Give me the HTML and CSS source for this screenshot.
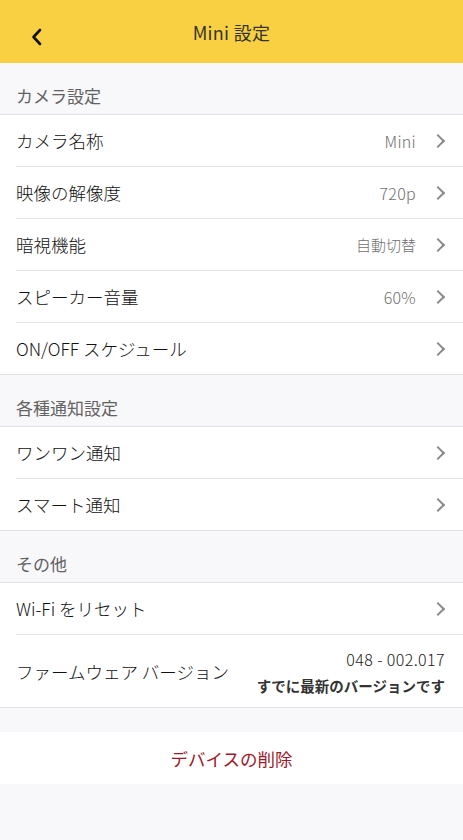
FILE: index.html
```html
<!DOCTYPE html>
<html lang="ja">
  <head>
    <meta charset="UTF-8" />
    <meta name="viewport" content="width=device-width, initial-scale=1.0" />
    <title>Mini 設定</title>
    <link rel="stylesheet" href="styles.css">
  </head>
  <body>
    <header class="topbar">
      <button class="back" aria-label="戻る">
        <svg width="14" height="20" viewBox="0 0 14 20"><path d="M10 3 L3.5 10 L10 17" fill="none" stroke="#111" stroke-width="2.6" stroke-linecap="round" stroke-linejoin="round"/></svg>
      </button>
      <h1>Mini 設定</h1>
    </header>

    <div class="section-title">カメラ設定</div>
    <ul class="group">
      <li class="row"><span class="label">カメラ名称</span><span class="value">Mini</span><span class="chev"></span></li>
      <li class="row"><span class="label">映像の解像度</span><span class="value">720p</span><span class="chev"></span></li>
      <li class="row"><span class="label">暗視機能</span><span class="value small">自動切替</span><span class="chev"></span></li>
      <li class="row"><span class="label">スピーカー音量</span><span class="value">60%</span><span class="chev"></span></li>
      <li class="row"><span class="label">ON/OFF スケジュール</span><span class="chev"></span></li>
    </ul>

    <div class="section-title">各種通知設定</div>
    <ul class="group">
      <li class="row"><span class="label">ワンワン通知</span><span class="chev"></span></li>
      <li class="row"><span class="label">スマート通知</span><span class="chev"></span></li>
    </ul>

    <div class="section-title">その他</div>
    <ul class="group">
      <li class="row"><span class="label">Wi-Fi をリセット</span><span class="chev"></span></li>
      <li class="row firmware">
        <span class="label">ファームウェア バージョン</span>
        <div class="fw-info">
          <span class="fw-version">048 - 002.017</span>
          <span class="fw-status">すでに最新のバージョンです</span>
        </div>
      </li>
    </ul>

    <button class="delete">デバイスの削除</button>
  </body>
</html>
```

FILE: styles.css
```css
body {
  font-family: "Noto Sans CJK JP", "Noto Sans", sans-serif;
  background-color: #f8f7fa;
  color: #1a1a1a;
  margin: 0;
  padding: 0;
  min-height: 100vh;
}

.topbar {
  height: 63px;
  background-color: #f9d042;
  display: flex;
  align-items: center;
  justify-content: center;
  position: relative;
}

.topbar h1 {
  margin: 0;
  font-size: 18px;
  font-weight: 400;
  color: #333;
  letter-spacing: 0.3px;
}

.back {
  position: absolute;
  left: 30px;
  top: 27px;
  background: none;
  border: none;
  padding: 0;
  display: flex;
}

.section-title {
  height: 51px;
  box-sizing: border-box;
  padding: 22px 16px 0;
  font-size: 17px;
  line-height: 22px;
  font-weight: 400;
  color: #626262;
}

.group {
  list-style: none;
  margin: 0;
  padding: 0;
  background-color: #fff;
  border-top: 1px solid #e2e1e6;
  border-bottom: 1px solid #e2e1e6;
}

.row {
  height: 51px;
  margin-left: 16px;
  padding-right: 18px;
  display: flex;
  align-items: center;
  border-bottom: 1.5px solid #e4e3e8;
  box-sizing: content-box;
}

.row:last-child {
  border-bottom: none;
}

.label {
  flex: 1;
  font-size: 17.5px;
  font-weight: 300;
  color: #111;
  white-space: nowrap;
}

.value {
  font-size: 16px;
  font-weight: 300;
  color: #6f6f6f;
  margin-right: 17px;
  letter-spacing: 0.3px;
}

.value.small {
  font-size: 15px;
  letter-spacing: 0;
}

.chev {
  width: 8px;
  height: 8px;
  border-right: 2px solid #8a8a8e;
  border-top: 2px solid #8a8a8e;
  transform: rotate(45deg);
  margin-right: 2px;
}

.row.firmware {
  height: 72px;
}

.fw-info {
  display: flex;
  flex-direction: column;
  align-items: flex-end;
  gap: 6px;
  padding-top: 2px;
}

.fw-version {
  font-size: 16px;
  font-weight: 300;
  color: #222;
  line-height: 22px;
  letter-spacing: 0.4px;
}

.fw-status {
  font-size: 14.5px;
  font-weight: 700;
  color: #333;
  line-height: 20px;
}

.delete {
  display: block;
  width: 100%;
  height: 52px;
  margin-top: 24px;
  background-color: #fff;
  border: none;
  font-family: inherit;
  font-size: 17.5px;
  font-weight: 400;
  color: #9c1a2a;
}
```
